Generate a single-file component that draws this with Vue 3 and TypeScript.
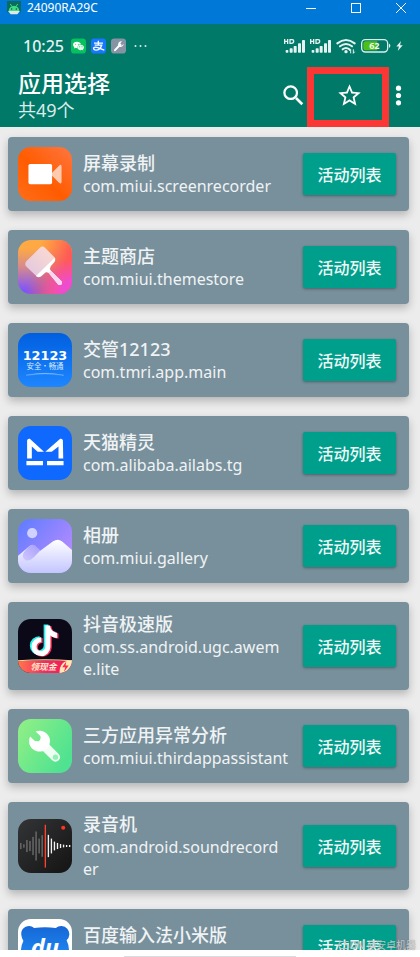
<script setup lang="ts">
interface AppEntry {
  icon: string
  name: string
  pkg: string
}

const apps: AppEntry[] = [
  { icon: 'recorder', name: '屏幕录制', pkg: 'com.miui.screenrecorder' },
  { icon: 'theme', name: '主题商店', pkg: 'com.miui.themestore' },
  { icon: 'traffic', name: '交管12123', pkg: 'com.tmri.app.main' },
  { icon: 'genie', name: '天猫精灵', pkg: 'com.alibaba.ailabs.tg' },
  { icon: 'gallery', name: '相册', pkg: 'com.miui.gallery' },
  { icon: 'douyin', name: '抖音极速版', pkg: 'com.ss.android.ugc.awem\ne.lite' },
  { icon: 'wrench', name: '三方应用异常分析', pkg: 'com.miui.thirdappassistant' },
  { icon: 'sound', name: '录音机', pkg: 'com.android.soundrecord\ner' },
  { icon: 'baidu', name: '百度输入法小米版', pkg: '' },
]

// Half-heights of the sound recorder's waveform, left and right of the playhead.
const waveLeft = [9, 5, 18, 15, 27, 43, 22, 32]
const waveRight = [33, 22, 13, 9, 6, 4, 3, 3]
const note = 'M76 16h14c1 12 9 20 21 22v15c-8 0-15-3-20-7v33a28 28 0 1 1-27-28v15a13 13 0 1 0 12 13z'
</script>

<template>
  <div class="window">
    <header class="titlebar">
      <svg class="droid" viewBox="0 0 42 42" aria-hidden="true">
        <rect width="42" height="34" fill="#0b6b5e" />
        <path d="M5 30a16 16 0 0 1 32 0z" fill="#3ddc84" />
        <path d="M10 9l5 8M32 9l-5 8" stroke="#3ddc84" stroke-width="3" />
        <circle cx="14" cy="24" r="2" fill="#07483f" />
        <circle cx="28" cy="24" r="2" fill="#07483f" />
        <path d="M3 30h36l-8 10H11z" fill="#dfe8e6" />
      </svg>
      <span class="device">24090RA29C</span>
      <div class="window-buttons">
        <button type="button" aria-label="最小化">
          <svg viewBox="0 0 12 12"><path d="M1 6.500h10" /></svg>
        </button>
        <button type="button" aria-label="最大化">
          <svg viewBox="0 0 12 12"><rect x="1.500" y="1.500" width="9" height="9" /></svg>
        </button>
        <button type="button" aria-label="关闭">
          <svg viewBox="0 0 12 12"><path d="M1 1l10 10M11 1L1 11" /></svg>
        </button>
      </div>
    </header>

    <div class="top">
      <div class="status">
        <span class="clock">10:25</span>
        <div class="notices">
          <svg viewBox="0 0 45 45" aria-hidden="true">
            <rect width="45" height="45" rx="10" fill="#07c160" />
            <path d="M18 10c-7 0-12 4-12 9 0 3 2 5 4 7l-1 4 5-2 5 1c-1-7 4-12 11-12-1-4-6-7-12-7z" fill="#fff" />
            <path d="M29 19c-6 0-10 4-10 8s4 8 10 8l4-1 4 2-1-4c2-1 3-3 3-5 0-4-4-8-10-8z" fill="#e4f8ec" />
            <g fill="#07c160"><circle cx="14" cy="17" r="1.500" /><circle cx="22" cy="17" r="1.500" /><circle cx="26" cy="25" r="1.500" /><circle cx="33" cy="25" r="1.500" /></g>
          </svg>
          <svg viewBox="0 0 45 45" aria-hidden="true">
            <rect width="45" height="45" rx="10" fill="#1677ff" />
            <path d="M9 14h27M22 7v13M11 20h21c-3 9-10 15-17 15-9 0-10-9-1-9 8 0 15 5 26 9" fill="none" stroke="#fff" stroke-width="4" />
          </svg>
          <svg viewBox="0 0 45 45" aria-hidden="true">
            <rect width="45" height="45" rx="10" fill="#8593a4" />
            <path d="M12 35l16-17" stroke="#fff" stroke-width="6" stroke-linecap="round" />
            <path d="M33 9l-6 6 1 5 5 1 5-5a9 9 0 0 1-14 8 9 9 0 0 1 9-15z" fill="#fff" />
          </svg>
          <svg class="more-notices" viewBox="0 0 14 16" aria-hidden="true">
            <circle cx="2" cy="8" r="1" /><circle cx="7" cy="8" r="1" /><circle cx="12" cy="8" r="1" />
          </svg>
        </div>
        <div class="signals">
          <svg v-for="n in 2" :key="n" class="cell" viewBox="0 0 63 48" aria-hidden="true">
            <path d="M2 3v15M2 10h9M11 3v15M18 5v11h4q7 0 7-6t-7-5z" fill="none" stroke="#e4f2f0" stroke-width="4" />
            <g fill="#e4f2f0">
              <rect x="5" y="36" width="8" height="8" rx="2" /><rect x="17" y="31" width="9" height="13" rx="2" /><rect x="29" y="24" width="9" height="20" rx="2" /><rect x="42" y="16" width="9" height="28" rx="2" /><rect x="54" y="6" width="9" height="38" rx="2" />
            </g>
          </svg>
          <svg class="wifi" viewBox="0 0 60 48" aria-hidden="true">
            <g fill="none" stroke="#e4f2f0" stroke-width="6" stroke-linecap="round">
              <path d="M4 16q26-20 52 0M12 25q18-14 36 0M20 34q10-8 20 0" />
            </g>
            <circle cx="30" cy="41" r="5" fill="#e4f2f0" />
            <path d="M44 46V34l-4 5M52 34v12l4-5" fill="none" stroke="#e4f2f0" stroke-width="3" />
          </svg>
          <svg class="battery" viewBox="0 0 90 42" aria-hidden="true">
            <rect x="2" y="2" width="78" height="37" rx="11" fill="none" stroke="#d9eeeb" stroke-width="4" />
            <path d="M15 7h34v27H15q-8 0-8-8V15q0-8 8-8z" fill="#4cc015" />
            <path d="M84 14q4 0 4 6t-4 6z" fill="#d9eeeb" />
            <text x="40" y="31" text-anchor="middle" class="level">62</text>
          </svg>
          <svg class="bolt" viewBox="0 0 24 36" aria-hidden="true">
            <path d="M17 1L1 20h9L6 35l17-20h-9z" fill="#e4f2f0" />
          </svg>
        </div>
      </div>

      <div class="appbar">
        <div class="heading">
          <h1>应用选择</h1>
          <p>共49个</p>
        </div>
        <div class="actions">
          <button class="search" type="button" aria-label="搜索">
            <svg viewBox="0 0 24 24"><path d="M14.200 14.200l5.600 5.600" stroke="#fff" stroke-width="2.300" /><circle cx="9.500" cy="9.500" r="5.600" fill="none" stroke="#fff" stroke-width="2" /></svg>
          </button>
          <button class="favorite" type="button" aria-label="收藏">
            <svg viewBox="0 0 24 24"><path d="M22 9.240l-7.190-.620L12 2 9.190 8.630 2 9.240l5.460 4.730L5.820 21 12 17.270 18.180 21l-1.630-7.030zM12 15.400l-3.760 2.270 1-4.280-3.320-2.880 4.380-.380L12 6.100l1.710 4.040 4.380.380-3.320 2.880 1 4.280z" /></svg>
          </button>
          <button class="overflow" type="button" aria-label="更多">
            <svg viewBox="0 0 24 24"><circle cx="12" cy="5.500" r="2.300" /><circle cx="12" cy="12" r="2.300" /><circle cx="12" cy="18.500" r="2.300" /></svg>
          </button>
        </div>
      </div>
    </div>

    <main class="list">
      <article v-for="app in apps" :key="app.icon" class="card">
        <svg class="icon" viewBox="0 0 160 160" aria-hidden="true">
          <g v-if="app.icon === 'recorder'">
            <defs>
              <linearGradient id="rec" x1="0" y1="1" x2="1" y2="0"><stop offset="0.100" stop-color="#ff6a14" /><stop offset="0.450" stop-color="#ff5c00" /><stop offset="1" stop-color="#ff7640" /></linearGradient>
            </defs>
            <rect width="160" height="160" rx="38" fill="url(#rec)" />
            <path d="M101 76l20-20q8-7 8 2v45q0 9-8 2l-20-20z" fill="#ffcbb0" />
            <rect x="31" y="50" width="70" height="60" rx="5" fill="#fff" />
          </g>
          <g v-else-if="app.icon === 'theme'">
            <defs>
              <linearGradient id="th" x1="0.200" y1="0" x2="0.200" y2="1"><stop offset="0.150" stop-color="#ffa944" /><stop offset="0.500" stop-color="#d58a8c" /><stop offset="0.950" stop-color="#7b52ff" /></linearGradient>
              <linearGradient id="th2" x1="0.400" y1="0.100" x2="1" y2="0.300"><stop offset="0" stop-color="#ff6b45" stop-opacity="0" /><stop offset="0.900" stop-color="#ff5a55" /></linearGradient>
              <radialGradient id="th3" cx="1" cy="0.950" r="0.600"><stop offset="0" stop-color="#f04bd0" /><stop offset="0.300" stop-color="#ee4cd0" /><stop offset="1" stop-color="#f04bd0" stop-opacity="0" /></radialGradient>
              <linearGradient id="th4" x1="0" y1="1" x2="1" y2="0"><stop offset="0" stop-color="#dfc6e2" /><stop offset="1" stop-color="#ffdccf" /></linearGradient>
            </defs>
            <rect width="160" height="160" rx="38" fill="url(#th)" />
            <rect width="160" height="160" rx="38" fill="url(#th2)" />
            <rect width="160" height="160" rx="38" fill="url(#th3)" />
            <path d="M65 23q8-7 15 0l28 28q5 5 0 10L63 108q-5 3-9-1L24 78q-5-7 0-14z" fill="url(#th4)" />
            <path d="M108 53q5 6 0 12L97 78q-5 7 1 14l31 30q5 13-9 11L91 98q-7-6-13 1l-10 9q-8 5-15-1z" fill="#fff" />
            <path d="M98 92l31 30q5 13-9 11L91 98z" fill="#f9d7f1" />
          </g>
          <g v-else-if="app.icon === 'traffic'">
            <defs>
              <linearGradient id="tr" x1="0" y1="0" x2="0" y2="1"><stop offset="0" stop-color="#005fe0" /><stop offset="1" stop-color="#1e86ff" /></linearGradient>
            </defs>
            <rect width="160" height="160" rx="38" fill="url(#tr)" />
            <text x="80" y="79" text-anchor="middle" class="traffic-number">12123</text>
            <text x="80" y="108" text-anchor="middle" class="traffic-slogan">安全·畅通</text>
            <path d="M24 125q56-11 112 0q-56-8-112 0z" fill="#b9dcff" stroke="#8fc5ff" />
          </g>
          <g v-else-if="app.icon === 'genie'">
            <rect width="160" height="160" rx="38" fill="#1069ff" />
            <g fill="#fff">
              <path d="M27 42q2-6 8-4l42 38H58L41 61v35H27z" />
              <path d="M133 42q-2-6-8-4L81 76h19l20-15v35h14z" />
              <path d="M25 104h49v12H25zM86 104h49v12H86z" />
            </g>
          </g>
          <g v-else-if="app.icon === 'gallery'">
            <defs>
              <clipPath id="gc"><rect width="160" height="160" rx="38" /></clipPath>
              <linearGradient id="ga" x1="0" y1="0" x2="1" y2="0.800"><stop offset="0" stop-color="#5c7cff" /><stop offset="1" stop-color="#bd8cff" /></linearGradient>
              <linearGradient id="gb" x1="0" y1="0" x2="0" y2="1"><stop offset="0" stop-color="#fff" /><stop offset="1" stop-color="#c0c2ff" /></linearGradient>
              <linearGradient id="gd" x1="1" y1="0" x2="0" y2="1"><stop offset="0" stop-color="#a79df8" /><stop offset="1" stop-color="#cfc8ff" /></linearGradient>
            </defs>
            <g clip-path="url(#gc)">
              <rect width="160" height="160" fill="url(#ga)" />
              <circle cx="42" cy="42" r="15" fill="#cfd2ff" />
              <path d="M-4 112l36-30q10-8 20 0l14 12 38-28q14-9 26 0l34 29v70H-4z" fill="url(#gb)" />
              <path d="M14 109q-1-7 7-15l12-13q10-9 19-1l14 13-19 20q-12 12-25 9-8-4-8-13z" fill="url(#gd)" />
            </g>
          </g>
          <g v-else-if="app.icon === 'douyin'">
            <defs>
              <clipPath id="dc"><rect width="160" height="160" rx="38" /></clipPath>
              <linearGradient id="dg"><stop offset="0" stop-color="#ff764e" /><stop offset="0.500" stop-color="#f52a61" /><stop offset="1" stop-color="#f21b58" /></linearGradient>
            </defs>
            <g clip-path="url(#dc)">
              <rect width="160" height="160" fill="#0b0918" />
              <path :d="note" fill="#25f4ee" />
              <path :d="note" fill="#fe2c55" transform="translate(9 5)" />
              <path :d="note" fill="#fff" transform="translate(5 3)" />
              <path d="M0 125q80-6 160 0v36H0z" fill="url(#dg)" />
              <path d="M0 124q80-6 160 0" fill="none" stroke="#ffd894" stroke-width="3" />
              <path d="M160 123q-37-2-37 37h37z" fill="#ffe8b5" />
              <path d="M143 126l-12 17h9l-4 14 14-19h-9z" fill="#ff2855" />
              <text x="75" y="150" text-anchor="middle" class="cash">领现金</text>
            </g>
          </g>
          <g v-else-if="app.icon === 'wrench'">
            <defs>
              <linearGradient id="wr" x1="0" y1="0" x2="1" y2="0.600"><stop offset="0" stop-color="#93f085" /><stop offset="1" stop-color="#4fe291" /></linearGradient>
            </defs>
            <rect width="160" height="160" rx="38" fill="url(#wr)" />
            <path d="M75 77l36 36" stroke="#f0fff3" stroke-width="27" stroke-linecap="round" />
            <path d="M52 37l12 11q4 3 3 8l-2 6q-2 4-6 4l-9-1-14-13a31 31 0 1 0 16-15z" fill="#fff" />
            <circle cx="111" cy="113" r="8" fill="#8ff1b4" />
          </g>
          <g v-else-if="app.icon === 'sound'">
            <defs>
              <linearGradient id="so" x1="0" y1="0" x2="1" y2="1"><stop offset="0" stop-color="#333435" /><stop offset="1" stop-color="#141415" /></linearGradient>
            </defs>
            <rect width="160" height="160" rx="38" fill="url(#so)" />
            <rect v-for="(h, i) in waveLeft" :key="'l' + i" :x="7 + i * 9" :y="80 - h" width="3" :height="h * 2" fill="#858585" />
            <rect v-for="(h, i) in waveRight" :key="'r' + i" :x="88 + i * 9" :y="80 - h" width="4" :height="h * 2" fill="#f2f2f2" />
            <rect x="79" y="17" width="4" height="127" fill="#ff4130" />
            <circle cx="134" cy="26" r="6" fill="#ff3320" />
          </g>
          <g v-else>
            <defs>
              <linearGradient id="ba" x1="0" y1="0" x2="0" y2="1"><stop offset="0" stop-color="#1767d5" /><stop offset="1" stop-color="#1e93ff" /></linearGradient>
            </defs>
            <rect width="160" height="160" rx="38" fill="#fff" />
            <path d="M10 48a23 23 0 0 1 38-21q32-5 64 0a23 23 0 0 1 32 36q12 25 4 46-15 31-68 31t-68-31q-8-22 4-44-5-7-6-17z" fill="url(#ba)" />
            <text x="80" y="109" text-anchor="middle" class="du">du</text>
          </g>
        </svg>
        <div class="info">
          <h2>{{ app.name }}</h2>
          <p>{{ app.pkg }}</p>
        </div>
        <button class="open" type="button">活动列表</button>
      </article>
    </main>

    <footer class="navbar"><span class="gesture"></span></footer>
    <div class="highlight"></div>
    <span class="watermark">CSDN @安卓机器</span>
  </div>
</template>

<style>
body {
  background: #ececec;
}
</style>

<style scoped>
.window {
  position: relative;
  display: flex;
  flex-direction: column;
  height: 100vh;
  overflow: hidden;
  font-family: "Noto Sans", "Noto Sans CJK SC", sans-serif;
}

button {
  padding: 0;
  border: 0;
  background: none;
  font-family: inherit;
}

h1,
h2,
p {
  margin: 0;
}

.titlebar {
  display: flex;
  flex: none;
  align-items: center;
  box-sizing: border-box;
  height: 24px;
  padding: 0 13px 8px 7px;
  background: #0078d7;
  color: #fff;
}

.droid {
  width: 14px;
  height: 14px;
}

.device {
  margin-left: 6px;
  font-size: 12px;
  line-height: 16px;
}

.window-buttons {
  display: flex;
  gap: 33px;
  margin-left: auto;
}

.window-buttons button {
  width: 12px;
  height: 12px;
}

.window-buttons svg {
  display: block;
  fill: none;
  stroke: #fff;
}

.top {
  flex: none;
  height: 103px;
  background: #007969;
  color: #fff;
}

.status {
  display: flex;
  align-items: center;
  height: 20px;
  padding: 12px 17px 0 23px;
}

.clock {
  font-size: 16px;
  font-weight: 500;
  line-height: 20px;
  color: #e4f2f0;
}

.notices {
  display: flex;
  gap: 5px;
  margin-left: 7px;
}

.notices svg {
  width: 15px;
  height: 16px;
}

.notices .more-notices {
  margin-left: 2px;
  fill: #d9eeeb;
}

.signals {
  display: flex;
  align-items: center;
  gap: 5px;
  margin-left: auto;
}

.cell {
  width: 21px;
  height: 16px;
}

.wifi {
  width: 20px;
  height: 16px;
}

.battery {
  width: 30px;
  height: 14px;
}

.level {
  font-family: "Open Sans", sans-serif;
  font-size: 27px;
  font-weight: 700;
  fill: #f2fbf5;
}

.bolt {
  width: 7px;
  height: 12px;
}

.appbar {
  display: flex;
  justify-content: space-between;
  padding: 12px 8px 0 18px;
}

.heading h1 {
  font-size: 23px;
  font-weight: 500;
  line-height: 30px;
}

.heading p {
  font-size: 18px;
  line-height: 25px;
  color: #dcebe9;
}

.actions {
  display: flex;
  align-items: center;
  height: 54px;
}

.actions svg {
  display: block;
  width: 27px;
  height: 27px;
  fill: #fff;
}

.favorite {
  margin: 0 22px 0 29px;
}

.list {
  display: flex;
  flex: 1;
  flex-direction: column;
  gap: 19px;
  min-height: 0;
  padding: 10px 11px 0 8px;
  overflow: hidden;
  background: #ececec;
}

.card {
  display: flex;
  flex: none;
  align-items: center;
  padding: 10px 13px 10px 10px;
  border-radius: 4px;
  background: #78909c;
  box-shadow: 0 4px 8px rgba(0, 0, 0, 0.24);
}

.icon {
  flex: none;
  width: 54px;
  height: 54px;
}

.info {
  flex: 1;
  min-width: 0;
  margin: 0 8px 0 11px;
  color: #f0f3f4;
}

.info h2 {
  font-size: 18px;
  font-weight: 500;
  line-height: 24px;
  white-space: nowrap;
}

.info p {
  min-height: 22px;
  font-size: 16px;
  line-height: 22px;
  white-space: pre-line;
  word-break: break-all;
}

.open {
  flex: none;
  width: 93px;
  height: 42px;
  border-radius: 2px;
  background: #009f8c;
  box-shadow: 0 1px 3px rgba(0, 0, 0, 0.35);
  color: #f0f8f7;
  font-size: 16px;
  font-weight: 500;
}

.traffic-number {
  font-family: "DejaVu Sans", sans-serif;
  font-size: 38px;
  font-weight: 700;
  fill: #fff;
}

.traffic-slogan {
  font-family: "Noto Sans CJK SC", sans-serif;
  font-size: 22px;
  fill: #d9ebff;
}

.cash {
  font-size: 26px;
  font-style: italic;
  font-weight: 700;
  fill: #ffe9c9;
}

.du {
  font-size: 70px;
  font-style: italic;
  font-weight: 700;
  fill: #fff;
}

.navbar {
  display: flex;
  flex: none;
  align-items: flex-end;
  justify-content: center;
  height: 7px;
  background: #fff;
}

.gesture {
  width: 41%;
  height: 1px;
  background: #dcdcdc;
}

.highlight {
  position: absolute;
  top: 67px;
  right: 31px;
  box-sizing: border-box;
  width: 82px;
  height: 60px;
  border: 7px solid #fb3735;
  pointer-events: none;
}

.watermark {
  position: absolute;
  right: 4px;
  bottom: 4px;
  font-size: 10px;
  line-height: 16px;
  color: rgba(225, 228, 229, 0.8);
  text-shadow: 0 0 1px rgba(60, 60, 60, 0.6);
}
</style>
